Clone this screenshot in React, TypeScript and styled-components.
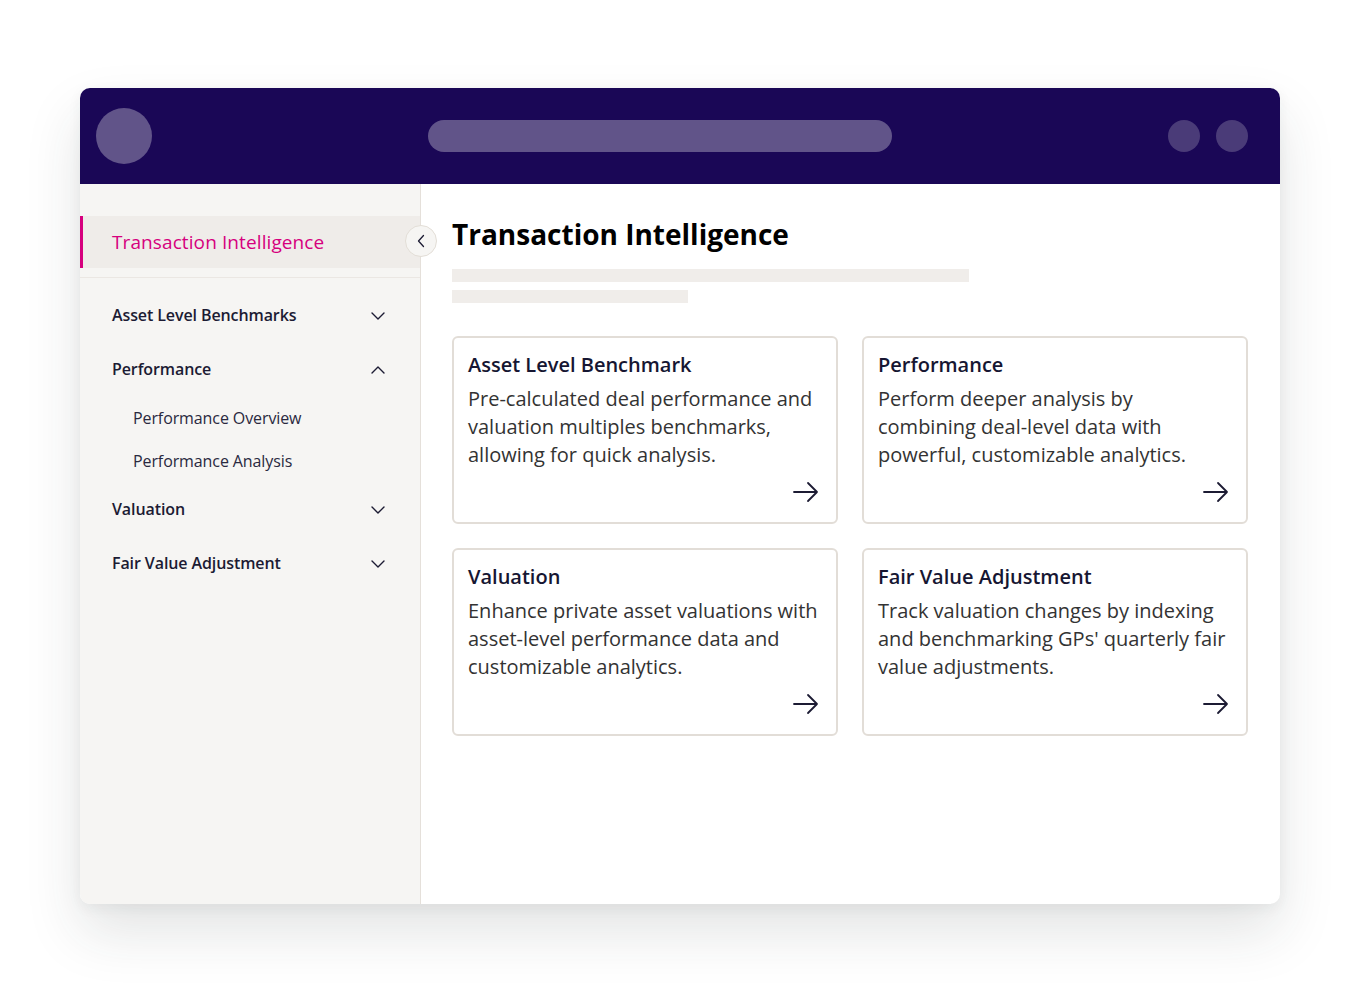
import React from "react";
import styled, { createGlobalStyle } from "styled-components";

const GlobalStyle = createGlobalStyle`
  html, body {
    margin: 0;
    padding: 0;
    background: #ffffff;
  }
  body {
    font-family: "Open Sans", "Liberation Sans", sans-serif;
    color: #1c1b33;
  }
`;

const navItems = [
  { label: "Asset Level Benchmarks", open: false, children: [] as string[] },
  {
    label: "Performance",
    open: true,
    children: ["Performance Overview", "Performance Analysis"],
  },
  { label: "Valuation", open: false, children: [] as string[] },
  { label: "Fair Value Adjustment", open: false, children: [] as string[] },
];

const cards = [
  {
    title: "Asset Level Benchmark",
    text: "Pre-calculated deal performance and valuation multiples benchmarks, allowing for quick analysis.",
  },
  {
    title: "Performance",
    text: "Perform deeper analysis by combining deal-level data with powerful, customizable analytics.",
  },
  {
    title: "Valuation",
    text: "Enhance private asset valuations with asset-level performance data and customizable analytics.",
  },
  {
    title: "Fair Value Adjustment",
    text: "Track valuation changes by indexing and benchmarking GPs' quarterly fair value adjustments.",
  },
];

const Chevron = ({ up }: { up?: boolean }) => (
  <svg width="14" height="8" viewBox="0 0 14 8" fill="none">
    <path
      d={up ? "M1 7 L7 1 L13 7" : "M1 1 L7 7 L13 1"}
      stroke="#1c1b33"
      strokeWidth="1.4"
      strokeLinecap="round"
      strokeLinejoin="round"
    />
  </svg>
);

const ArrowRight = () => (
  <svg width="26" height="22" viewBox="0 0 26 22" fill="none">
    <path
      d="M1 11 H24 M15 2 L24 11 L15 20"
      stroke="#1c1b33"
      strokeWidth="1.8"
      strokeLinecap="round"
      strokeLinejoin="round"
    />
  </svg>
);

const App = () => {
  return (
    <Page>
      <GlobalStyle />
      <Window>
        <TopBar>
          <Avatar />
          <SearchPill />
          <TopActions>
            <Dot />
            <Dot />
          </TopActions>
        </TopBar>
        <Body>
          <Sidebar>
            <ActiveItem>Transaction Intelligence</ActiveItem>
            <CollapseButton>
              <svg width="10" height="14" viewBox="0 0 10 14" fill="none">
                <path
                  d="M7.5 1.5 L2.5 7 L7.5 12.5"
                  stroke="#1c1b33"
                  strokeWidth="1.3"
                  strokeLinecap="round"
                  strokeLinejoin="round"
                />
              </svg>
            </CollapseButton>
            <Divider />
            <NavList>
              {navItems.map((item) => (
                <React.Fragment key={item.label}>
                  <NavRow>
                    <span>{item.label}</span>
                    <Chevron up={item.open} />
                  </NavRow>
                  {item.children.map((child) => (
                    <SubRow key={child}>{child}</SubRow>
                  ))}
                </React.Fragment>
              ))}
            </NavList>
          </Sidebar>
          <Main>
            <Title>Transaction Intelligence</Title>
            <Placeholder width={517} />
            <Placeholder width={236} />
            <CardGrid>
              {cards.map((card) => (
                <Card key={card.title}>
                  <CardTitle>{card.title}</CardTitle>
                  <CardText>{card.text}</CardText>
                  <CardFooter>
                    <ArrowRight />
                  </CardFooter>
                </Card>
              ))}
            </CardGrid>
          </Main>
        </Body>
      </Window>
    </Page>
  );
};

export default App;

const Page = styled.div`
  width: 1360px;
  height: 992px;
  box-sizing: border-box;
  padding: 88px 80px;
`;

const Window = styled.div`
  width: 1200px;
  height: 816px;
  border-radius: 10px;
  overflow: hidden;
  display: flex;
  flex-direction: column;
  background: #ffffff;
  box-shadow: 0 28px 56px rgba(40, 50, 50, 0.13), 0 4px 14px rgba(40, 50, 50, 0.06);
`;

const TopBar = styled.div`
  height: 96px;
  flex-shrink: 0;
  background: #1a0756;
  display: flex;
  align-items: center;
  padding: 0 32px 0 16px;
  box-sizing: border-box;
`;

const Avatar = styled.div`
  width: 56px;
  height: 56px;
  border-radius: 50%;
  background: #615489;
`;

const SearchPill = styled.div`
  width: 464px;
  height: 32px;
  border-radius: 16px;
  background: #615489;
  margin-left: 276px;
`;

const TopActions = styled.div`
  margin-left: auto;
  display: flex;
  gap: 16px;
`;

const Dot = styled.div`
  width: 32px;
  height: 32px;
  border-radius: 50%;
  background: #4a3b78;
`;

const Body = styled.div`
  flex: 1;
  display: flex;
  min-height: 0;
`;

const Sidebar = styled.div`
  position: relative;
  width: 340px;
  flex-shrink: 0;
  background: #f6f5f3;
  border-right: 1px solid #e5e0da;
  padding-top: 32px;
  box-sizing: content-box;
`;

const ActiveItem = styled.div`
  height: 52px;
  display: flex;
  align-items: center;
  padding-left: 29px;
  background: #efece9;
  border-left: 3px solid #d6007e;
  color: #d6007e;
  font-size: 19px;
  font-weight: 400;
  letter-spacing: 0.1px;
`;

const CollapseButton = styled.div`
  position: absolute;
  top: 41px;
  right: -17px;
  width: 30px;
  height: 30px;
  border-radius: 50%;
  background: #f6f5f3;
  border: 1px solid #e2ddd6;
  display: flex;
  align-items: center;
  justify-content: center;
  z-index: 2;
`;

const Divider = styled.div`
  height: 1px;
  margin-top: 9px;
  background: #ebe7e3;
`;

const NavList = styled.div`
  padding: 10px 32px 0 32px;
  display: flex;
  flex-direction: column;
`;

const NavRow = styled.div`
  height: 54px;
  display: flex;
  align-items: center;
  justify-content: space-between;
  padding-right: 3px;
  font-size: 16px;
  font-weight: 600;
  letter-spacing: -0.1px;
  color: #1c1b33;

  svg {
    margin-top: 1px;
  }
`;

const SubRow = styled.div`
  height: 43px;
  display: flex;
  align-items: center;
  padding-left: 21px;
  font-size: 16px;
  font-weight: 400;
  letter-spacing: -0.1px;
  color: #2a2940;
`;

const Main = styled.div`
  flex: 1;
  padding: 32px 32px 0 31px;
  display: flex;
  flex-direction: column;
`;

const Title = styled.h1`
  margin: 0;
  font-size: 28px;
  line-height: 36px;
  font-weight: 700;
  color: #000000;
`;

const Placeholder = styled.div<{ width: number }>`
  width: ${(props) => props.width}px;
  height: 13px;
  background: #f0edea;
  margin-top: 17px;

  & + & {
    margin-top: 8px;
  }
`;

const CardGrid = styled.div`
  margin-top: 33px;
  display: grid;
  grid-template-columns: 386px 386px;
  grid-auto-rows: 188px;
  column-gap: 24px;
  row-gap: 24px;
`;

const Card = styled.div`
  border: 2px solid #e2ddd7;
  border-radius: 6px;
  padding: 13px 14px 19px 14px;
  display: flex;
  flex-direction: column;
  background: #ffffff;
`;

const CardTitle = styled.div`
  font-size: 20px;
  line-height: 28px;
  font-weight: 600;
  color: #161632;
`;

const CardText = styled.div`
  margin-top: 6px;
  font-size: 20px;
  line-height: 28px;
  font-weight: 400;
  color: #333333;
`;

const CardFooter = styled.div`
  margin-top: auto;
  display: flex;
  justify-content: flex-end;
  padding-right: 3px;
`;
